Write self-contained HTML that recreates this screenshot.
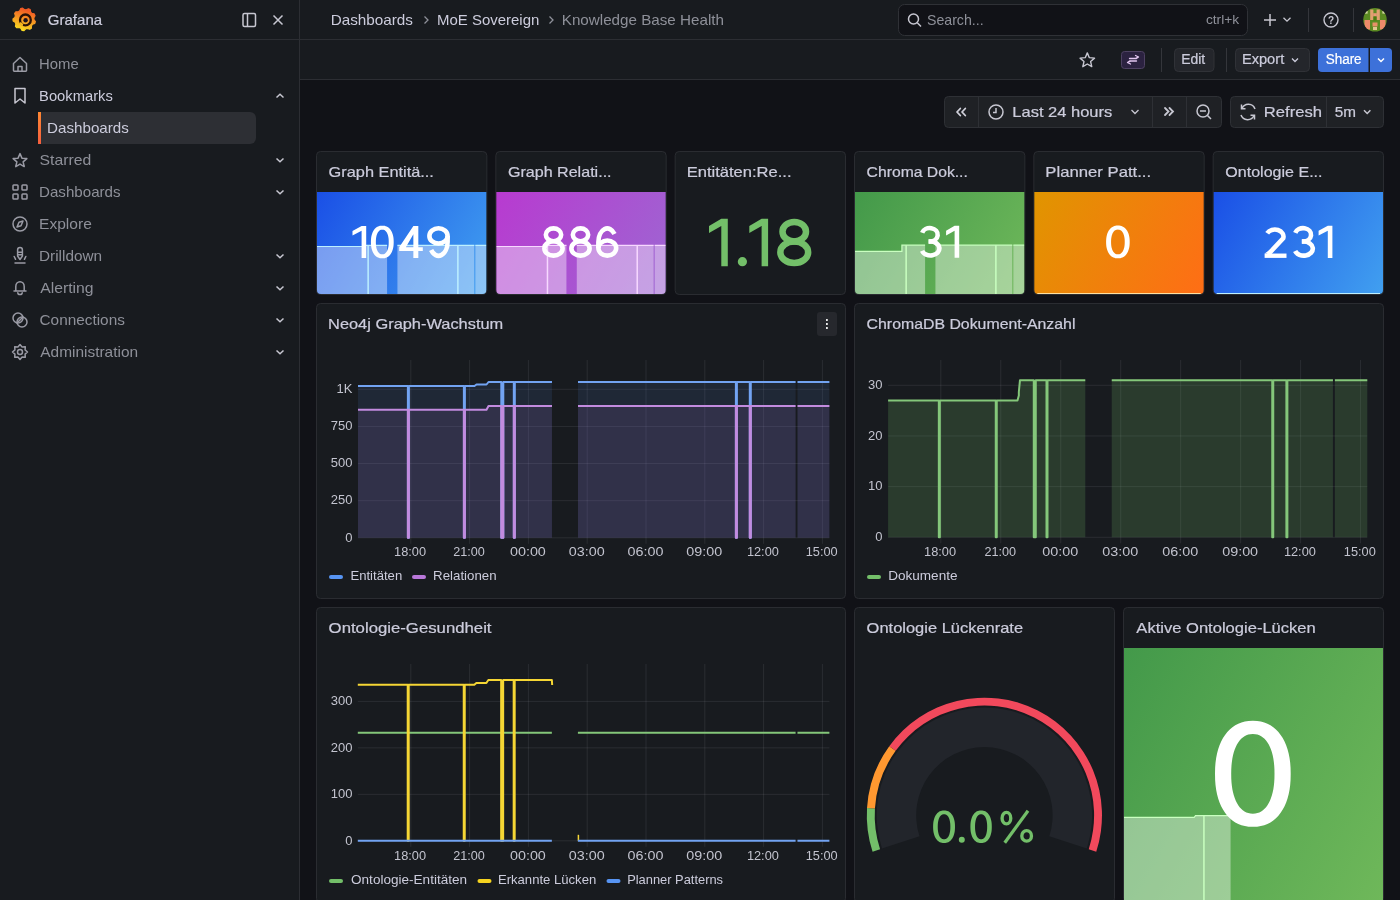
<!DOCTYPE html>
<html><head><meta charset="utf-8"><title>Knowledge Base Health - Dashboards - Grafana</title>
<style>
html,body{margin:0;padding:0;width:1400px;height:900px;overflow:hidden;background:#111217;}
svg{display:block;font-family:"Liberation Sans", sans-serif;will-change:transform;}
</style></head>
<body>
<svg width="1400" height="900" viewBox="0 0 1400 900">
<defs>
<linearGradient id="glogo" x1="0" y1="1" x2="0.3" y2="0">
<stop offset="0" stop-color="#fcee21"/><stop offset="1" stop-color="#f15a24"/></linearGradient>
<linearGradient id="gblue" x1="0" y1="0.2" x2="1" y2="0.8"><stop offset="0" stop-color="#1a4fe6"/><stop offset="1" stop-color="#41a0f0"/></linearGradient>
<linearGradient id="gpurple" x1="0" y1="0.2" x2="1" y2="0.8"><stop offset="0" stop-color="#b83ad0"/><stop offset="1" stop-color="#9d67d2"/></linearGradient>
<linearGradient id="ggreen" x1="0" y1="0.2" x2="1" y2="0.8"><stop offset="0" stop-color="#43994a"/><stop offset="1" stop-color="#6fb85a"/></linearGradient>
<linearGradient id="gorange" x1="0" y1="0.2" x2="1" y2="0.8"><stop offset="0" stop-color="#e09500"/><stop offset="1" stop-color="#ff6d16"/></linearGradient>
<linearGradient id="gblue_0" gradientUnits="userSpaceOnUse" x1="315.12" y1="193.53" x2="488.22" y2="293.47"><stop offset="0" stop-color="#1a4fe6"/><stop offset="1" stop-color="#41a0f0"/></linearGradient>
<linearGradient id="gpurple_1" gradientUnits="userSpaceOnUse" x1="494.45" y1="193.53" x2="667.55" y2="293.47"><stop offset="0" stop-color="#b83ad0"/><stop offset="1" stop-color="#9d67d2"/></linearGradient>
<linearGradient id="ggreen_2" gradientUnits="userSpaceOnUse" x1="853.12" y1="193.53" x2="1026.22" y2="293.47"><stop offset="0" stop-color="#43994a"/><stop offset="1" stop-color="#6fb85a"/></linearGradient>
<linearGradient id="gorange_3" gradientUnits="userSpaceOnUse" x1="1032.45" y1="193.53" x2="1205.55" y2="293.47"><stop offset="0" stop-color="#e09500"/><stop offset="1" stop-color="#ff6d16"/></linearGradient>
<linearGradient id="gblue_4" gradientUnits="userSpaceOnUse" x1="1211.78" y1="193.53" x2="1384.88" y2="293.47"><stop offset="0" stop-color="#1a4fe6"/><stop offset="1" stop-color="#41a0f0"/></linearGradient>
<linearGradient id="ggreen_5" gradientUnits="userSpaceOnUse" x1="1100.42" y1="687.12" x2="1406.58" y2="863.88"><stop offset="0" stop-color="#43994a"/><stop offset="1" stop-color="#6fb85a"/></linearGradient>
</defs>
<rect x="0.00" y="0.00" width="1400.00" height="900.00" fill="#111217"/>
<rect x="0.00" y="0.00" width="299.00" height="900.00" fill="#181b1f"/>
<line x1="299.50" y1="0.00" x2="299.50" y2="900.00" stroke="#2c2e33" stroke-width="1"/>
<rect x="300.00" y="0.00" width="1100.00" height="79.00" fill="#181b1f"/>
<line x1="0.00" y1="39.50" x2="1400.00" y2="39.50" stroke="#2c2e33" stroke-width="1"/>
<line x1="300.00" y1="79.50" x2="1400.00" y2="79.50" stroke="#2c2e33" stroke-width="1"/>
<path d="M35.37,21.54 L34.82,23.43 L32.49,24.31 L31.49,25.66 L31.34,28.14 L29.70,29.23 L27.35,28.40 L25.73,28.79 L24.01,30.60 L22.06,30.37 L20.79,28.23 L19.29,27.49 L16.82,27.77 L15.46,26.34 L15.87,23.89 L15.20,22.35 L13.13,20.98 L13.00,19.01 L14.89,17.39 L15.37,15.79 L14.66,13.40 L15.83,11.82 L18.32,11.79 L19.71,10.87 L20.71,8.59 L22.62,8.13 L24.54,9.70 L26.21,9.89 L28.43,8.78 L30.20,9.66 L30.66,12.11 L31.81,13.32 L34.23,13.90 L35.01,15.71 L33.79,17.87 L33.90,19.54Z" fill="url(#glogo)" stroke="url(#glogo)" stroke-width="1.2" stroke-linejoin="round"/>
<circle cx="25.4" cy="19.9" r="5.4" fill="none" stroke="#2a1208" stroke-width="2.3"/>
<path d="M20 22.5 A5.4 5.4 0 0 0 23 25" fill="none" stroke="#f7b51e" stroke-width="2.4"/>
<circle cx="25.6" cy="20.2" r="2.2" fill="#1c1220"/>
<text x="47.84" y="25.00" font-size="15" fill="#ccccdc" stroke="#ccccdc" stroke-width="0.22" textLength="54.26" lengthAdjust="spacingAndGlyphs">Grafana</text>
<rect x="243.00" y="13.50" width="12.50" height="13.00" fill="none" rx="1.5" stroke="#c7c7d1" stroke-width="1.5"/>
<line x1="247.50" y1="13.50" x2="247.50" y2="26.50" stroke="#c7c7d1" stroke-width="1.5"/>
<path d="M273.5 15.5 L282.5 24.5 M282.5 15.5 L273.5 24.5" fill="none" stroke="#c7c7d1" stroke-width="1.5"/>
<text x="39.08" y="69.00" font-size="15" fill="#8e9099" textLength="39.68" lengthAdjust="spacingAndGlyphs">Home</text>
<text x="39.09" y="101.00" font-size="15" fill="#ccccdc" textLength="73.74" lengthAdjust="spacingAndGlyphs">Bookmarks</text>
<path d="M276.5 97.5 L280 94.2 L283.5 97.5" fill="none" stroke="#c7c7d1" stroke-width="1.5"/>
<text x="39.58" y="165.00" font-size="15" fill="#8e9099" textLength="51.73" lengthAdjust="spacingAndGlyphs">Starred</text>
<path d="M276.5 158.5 L280 161.8 L283.5 158.5" fill="none" stroke="#c7c7d1" stroke-width="1.5"/>
<text x="39.06" y="197.00" font-size="15" fill="#8e9099" textLength="81.49" lengthAdjust="spacingAndGlyphs">Dashboards</text>
<path d="M276.5 190.5 L280 193.8 L283.5 190.5" fill="none" stroke="#c7c7d1" stroke-width="1.5"/>
<text x="39.02" y="229.00" font-size="15" fill="#8e9099" textLength="52.77" lengthAdjust="spacingAndGlyphs">Explore</text>
<text x="39.04" y="261.00" font-size="15" fill="#8e9099" textLength="63.05" lengthAdjust="spacingAndGlyphs">Drilldown</text>
<path d="M276.5 254.5 L280 257.8 L283.5 254.5" fill="none" stroke="#c7c7d1" stroke-width="1.5"/>
<text x="40.27" y="293.00" font-size="15" fill="#8e9099" textLength="53.34" lengthAdjust="spacingAndGlyphs">Alerting</text>
<path d="M276.5 286.5 L280 289.8 L283.5 286.5" fill="none" stroke="#c7c7d1" stroke-width="1.5"/>
<text x="39.52" y="325.00" font-size="15" fill="#8e9099" textLength="85.33" lengthAdjust="spacingAndGlyphs">Connections</text>
<path d="M276.5 318.5 L280 321.8 L283.5 318.5" fill="none" stroke="#c7c7d1" stroke-width="1.5"/>
<text x="40.27" y="357.00" font-size="15" fill="#8e9099" textLength="97.83" lengthAdjust="spacingAndGlyphs">Administration</text>
<path d="M276.5 350.5 L280 353.8 L283.5 350.5" fill="none" stroke="#c7c7d1" stroke-width="1.5"/>
<path d="M41 112 H250 A6 6 0 0 1 256 118 V138 A6 6 0 0 1 250 144 H41 Z" fill="#2d2f34"/>
<linearGradient id="brandv" x1="0" y1="1" x2="0" y2="0"><stop offset="0" stop-color="#f55f3e"/><stop offset="1" stop-color="#ff8833"/></linearGradient>
<rect x="38.00" y="112.00" width="3.00" height="32.00" fill="url(#brandv)"/>
<text x="47.06" y="133.00" font-size="15" fill="#ccccdc" textLength="81.79" lengthAdjust="spacingAndGlyphs">Dashboards</text>
<path d="M13.5 63.5 L20 57.5 L26.5 63.5 V70.5 Q26.5 71.2 25.8 71.2 H14.2 Q13.5 71.2 13.5 70.5 Z M18 71.2 V66.5 H22 V71.2" fill="none" stroke="#9a9ba5" stroke-width="1.5" stroke-linejoin="round" stroke-linecap="round"/>
<path d="M15 88.5 H25 V103 L20 99 L15 103 Z" fill="none" stroke="#c7c7d1" stroke-width="1.5" stroke-linejoin="round" stroke-linecap="round"/>
<path d="M20.00,153.60 L21.94,158.13 L26.85,158.58 L23.14,161.82 L24.23,166.62 L20.00,164.10 L15.77,166.62 L16.86,161.82 L13.15,158.58 L18.06,158.13Z" fill="none" stroke="#9a9ba5" stroke-width="1.5" stroke-linejoin="round" stroke-linecap="round"/>
<rect x="13.00" y="185.00" width="5.00" height="5.00" fill="none" rx="0.8" stroke="#9a9ba5" stroke-width="1.5"/>
<rect x="22.00" y="185.00" width="5.00" height="5.00" fill="none" rx="0.8" stroke="#9a9ba5" stroke-width="1.5"/>
<rect x="13.00" y="194.00" width="5.00" height="5.00" fill="none" rx="0.8" stroke="#9a9ba5" stroke-width="1.5"/>
<rect x="22.00" y="194.00" width="5.00" height="5.00" fill="none" rx="0.8" stroke="#9a9ba5" stroke-width="1.5"/>
<circle cx="20" cy="224" r="7"  fill="none" stroke="#9a9ba5" stroke-width="1.5" stroke-linejoin="round" stroke-linecap="round"/>
<path d="M23 221 L21 225.8 L17 227 L19 222.2 Z" fill="none" stroke="#9a9ba5" stroke-width="1.5" stroke-linejoin="round" stroke-linecap="round"/>
<path d="M17.6 250 A2.4 2.4 0 0 1 22.4 250 V256 L20 259.5 L17.6 256 Z M17.8 252.3 H22.2 M17.8 254.8 H22.2 M14.2 256.5 L15.6 259.3 M25.8 256.5 L24.4 259.3 M15 263 H25" fill="none" stroke="#9a9ba5" stroke-width="1.5" stroke-linejoin="round" stroke-linecap="round"/>
<path d="M15.8 290.5 V286.5 A4.2 4.8 0 0 1 24.2 286.5 V290.5 M14 291 H26 M17.8 292.8 A2.2 1.8 0 0 0 22.2 292.8" fill="none" stroke="#9a9ba5" stroke-width="1.5" stroke-linejoin="round" stroke-linecap="round"/>
<circle cx="18" cy="318" r="5"  fill="none" stroke="#9a9ba5" stroke-width="1.5" stroke-linejoin="round" stroke-linecap="round"/><circle cx="22" cy="322" r="5"  fill="none" stroke="#9a9ba5" stroke-width="1.5" stroke-linejoin="round" stroke-linecap="round"/>
<path d="M17 323 L23 317" fill="none" stroke="#9a9ba5" stroke-width="1.5" stroke-linejoin="round" stroke-linecap="round"/>
<path d="M20.00,344.50 L22.10,346.92 L25.30,346.70 L25.08,349.90 L27.50,352.00 L25.08,354.10 L25.30,357.30 L22.10,357.08 L20.00,359.50 L17.90,357.08 L14.70,357.30 L14.92,354.10 L12.50,352.00 L14.92,349.90 L14.70,346.70 L17.90,346.92Z" fill="none" stroke="#9a9ba5" stroke-width="1.5" stroke-linejoin="round" stroke-linecap="round"/><circle cx="20" cy="352" r="2.5"  fill="none" stroke="#9a9ba5" stroke-width="1.5" stroke-linejoin="round" stroke-linecap="round"/>
<text x="330.65" y="25.00" font-size="15" fill="#ccccdc" textLength="82.30" lengthAdjust="spacingAndGlyphs">Dashboards</text>
<path d="M424.5 16.5 L428 20 L424.5 23.5" fill="none" stroke="#8e9099" stroke-width="1.3"/>
<text x="436.97" y="25.00" font-size="15" fill="#ccccdc" textLength="102.40" lengthAdjust="spacingAndGlyphs">MoE Sovereign</text>
<path d="M549.5 16.5 L553 20 L549.5 23.5" fill="none" stroke="#8e9099" stroke-width="1.3"/>
<text x="561.75" y="25.00" font-size="15" fill="#8e9099" textLength="162.23" lengthAdjust="spacingAndGlyphs">Knowledge Base Health</text>
<rect x="898.50" y="4.50" width="349.00" height="31.00" fill="#111217" rx="6" stroke="#2f3136" stroke-width="1"/>
<circle cx="913.5" cy="19" r="5" fill="none" stroke="#c7c7d1" stroke-width="1.5"/>
<path d="M917.3 22.8 L921 26.5" fill="none" stroke="#c7c7d1" stroke-width="1.5"/>
<text x="926.96" y="25.00" font-size="15" fill="#8e9099" textLength="56.63" lengthAdjust="spacingAndGlyphs">Search...</text>
<text x="1205.92" y="24.00" font-size="13" fill="#8e9099" textLength="33.26" lengthAdjust="spacingAndGlyphs">ctrl+k</text>
<path d="M1270 14 V26 M1264 20 H1276" fill="none" stroke="#c7c7d1" stroke-width="1.5"/>
<path d="M1283.5 17.8 L1287 21.2 L1290.5 17.8" fill="none" stroke="#c7c7d1" stroke-width="1.3"/>
<line x1="1308.50" y1="8.00" x2="1308.50" y2="32.00" stroke="#34363b" stroke-width="1"/>
<circle cx="1331" cy="20" r="7" fill="none" stroke="#c7c7d1" stroke-width="1.4"/>
<text x="1331.00" y="23.50" font-size="10" fill="#c7c7d1" font-weight="700" text-anchor="middle">?</text>
<line x1="1353.50" y1="8.00" x2="1353.50" y2="32.00" stroke="#34363b" stroke-width="1"/>
<clipPath id="avc"><circle cx="1375" cy="19.8" r="11.8"/></clipPath>
<g clip-path="url(#avc)">
<rect x="1363.00" y="8.00" width="24.00" height="24.00" fill="#5b8a22"/>
<rect x="1370.20" y="9.50" width="3.20" height="10.50" fill="#e0a070"/>
<rect x="1376.60" y="9.50" width="3.20" height="10.50" fill="#e0a070"/>
<rect x="1373.20" y="13.20" width="3.60" height="3.20" fill="#e89a78"/>
<rect x="1365.00" y="11.00" width="2.60" height="2.60" fill="#d8d8a8"/>
<rect x="1382.40" y="11.00" width="2.60" height="2.60" fill="#d8d8a8"/>
<rect x="1364.50" y="20.00" width="5.50" height="9.50" fill="#ee8a6a"/>
<rect x="1380.00" y="20.00" width="5.50" height="9.50" fill="#ee8a6a"/>
<rect x="1372.50" y="22.50" width="5.00" height="4.00" fill="#e89068"/>
<rect x="1373.00" y="27.00" width="4.00" height="3.00" fill="#e0c890"/>
<rect x="1373.50" y="16.50" width="3.00" height="4.00" fill="#4a7a10"/>
</g>
<path d="M1087.30,52.90 L1089.36,57.67 L1094.53,58.15 L1090.63,61.58 L1091.77,66.65 L1087.30,64.00 L1082.83,66.65 L1083.97,61.58 L1080.07,58.15 L1085.24,57.67Z" fill="none" stroke="#c7c7d1" stroke-width="1.4" stroke-linejoin="round"/>
<rect x="1121.50" y="51.50" width="23.00" height="17.00" fill="#2b2240" rx="3" stroke="#4e4262" stroke-width="1"/>
<path d="M1127.5 62.5 L1131 61 H1136.5 M1138.5 57 L1135 58.5 H1129.5 M1135.5 55.5 L1138.5 57 L1136 58.8 M1130.5 64 L1127.5 62.5 L1130 60.7" fill="none" stroke="#e2c6f0" stroke-width="1.3" stroke-linecap="round" stroke-linejoin="round"/>
<line x1="1161.50" y1="48.00" x2="1161.50" y2="72.00" stroke="#34363b" stroke-width="1"/>
<rect x="1174.50" y="48.50" width="39.50" height="23.00" fill="#24262b" rx="4" stroke="#303237" stroke-width="1"/>
<text x="1181.16" y="64.00" font-size="14" fill="#ccccdc" stroke="#ccccdc" stroke-width="0.22" textLength="24.05" lengthAdjust="spacingAndGlyphs">Edit</text>
<line x1="1226.50" y1="48.00" x2="1226.50" y2="72.00" stroke="#34363b" stroke-width="1"/>
<rect x="1235.50" y="48.50" width="74.00" height="23.00" fill="#24262b" rx="4" stroke="#303237" stroke-width="1"/>
<text x="1241.90" y="64.00" font-size="14" fill="#ccccdc" stroke="#ccccdc" stroke-width="0.22" textLength="42.31" lengthAdjust="spacingAndGlyphs">Export</text>
<path d="M1292 58.5 L1295 61.5 L1298 58.5" fill="none" stroke="#ccccdc" stroke-width="1.3"/>
<path d="M1322 48 H1368.5 V72 H1322 A4 4 0 0 1 1318 68 V52 A4 4 0 0 1 1322 48 Z" fill="#3d71d9"/>
<path d="M1370 48 H1388 A4 4 0 0 1 1392 52 V68 A4 4 0 0 1 1388 72 H1370 Z" fill="#3d71d9"/>
<text x="1325.69" y="64.00" font-size="14" fill="#ffffff" stroke="#ffffff" stroke-width="0.22" textLength="35.91" lengthAdjust="spacingAndGlyphs">Share</text>
<path d="M1378 58.5 L1381 61.5 L1384 58.5" fill="none" stroke="#ffffff" stroke-width="1.5"/>
<rect x="944.50" y="96.50" width="277.00" height="31.00" fill="#1f2125" rx="4" stroke="#2e3035" stroke-width="1"/>
<line x1="978.50" y1="97.00" x2="978.50" y2="127.00" stroke="#2e3035" stroke-width="1"/>
<line x1="1152.50" y1="97.00" x2="1152.50" y2="127.00" stroke="#2e3035" stroke-width="1"/>
<line x1="1186.50" y1="97.00" x2="1186.50" y2="127.00" stroke="#2e3035" stroke-width="1"/>
<path d="M960.3 108.5 L957 112 L960.3 115.5 M965.3 108.5 L962 112 L965.3 115.5" fill="none" stroke="#d0d0da" stroke-width="1.8" stroke-linecap="round" stroke-linejoin="round"/>
<circle cx="996" cy="112" r="7" fill="none" stroke="#c7c7d1" stroke-width="1.5"/>
<path d="M996 108 V112.5 H993" fill="none" stroke="#c7c7d1" stroke-width="1.5"/>
<text x="1012.35" y="116.90" font-size="15" fill="#ccccdc" stroke="#ccccdc" stroke-width="0.22" textLength="99.95" lengthAdjust="spacingAndGlyphs">Last 24 hours</text>
<path d="M1131.5 110 L1135 113.5 L1138.5 110" fill="none" stroke="#c7c7d1" stroke-width="1.3"/>
<path d="M1165 108 L1168.5 111.5 L1165 115 M1169.5 108 L1173 111.5 L1169.5 115" fill="none" stroke="#c7c7d1" stroke-width="1.8" stroke-linecap="round"/>
<circle cx="1203" cy="111" r="6" fill="none" stroke="#c7c7d1" stroke-width="1.5"/>
<path d="M1200 111 H1206 M1207.5 115.5 L1211 119" fill="none" stroke="#c7c7d1" stroke-width="1.5"/>
<rect x="1230.50" y="96.50" width="153.00" height="31.00" fill="#1f2125" rx="4" stroke="#2e3035" stroke-width="1"/>
<line x1="1326.50" y1="97.00" x2="1326.50" y2="127.00" stroke="#2e3035" stroke-width="1"/>
<path d="M1255 109 A7 7 0 0 0 1242 108.5 M1241 115 A7 7 0 0 0 1254 115.5" fill="none" stroke="#c7c7d1" stroke-width="1.5"/>
<path d="M1241.5 104.5 V108.8 H1245.5 M1254.5 119.5 V115.2 H1250.5" fill="none" stroke="#c7c7d1" stroke-width="1.5"/>
<text x="1263.84" y="117.00" font-size="15" fill="#ccccdc" stroke="#ccccdc" stroke-width="0.22" textLength="58.14" lengthAdjust="spacingAndGlyphs">Refresh</text>
<text x="1334.79" y="117.00" font-size="15" fill="#ccccdc" stroke="#ccccdc" stroke-width="0.22" textLength="21.22" lengthAdjust="spacingAndGlyphs">5m</text>
<path d="M1364 110.3 L1367.2 113.5 L1370.4 110.3" fill="none" stroke="#c7c7d1" stroke-width="1.5"/>
<rect x="316.50" y="151.50" width="170.33" height="143.00" fill="#181b1f" rx="4" stroke="#2a2c31" stroke-width="1"/>
<text x="328.58" y="177.00" font-size="15" fill="#ccccdc" stroke="#ccccdc" stroke-width="0.22" textLength="105.31" lengthAdjust="spacingAndGlyphs">Graph Entitä...</text>
<path d="M317.00 192 H486.33 V290.00 A4 4 0 0 1 482.33 294.00 H321.00 A4 4 0 0 1 317.00 290.00 Z" fill="url(#gblue_0)"/>
<clipPath id="sc0"><path d="M317.00 192 H486.33 V290.00 A4 4 0 0 1 482.33 294.00 H321.00 A4 4 0 0 1 317.00 290.00 Z"/></clipPath>
<g clip-path="url(#sc0)">
<path d="M317.00 294 V246.50 H363.91 V245.30 H387.10 V294 Z" fill="rgba(255,255,255,0.4)"/>
<path d="M317.00 246.50 H363.91 V245.30 H387.10" fill="none" stroke="#bdf0ff" stroke-width="1.2"/>
<path d="M397.43 294 V245.30 H474.31 V294 Z" fill="rgba(255,255,255,0.4)"/>
<path d="M397.43 245.30 H474.31" fill="none" stroke="#bdf0ff" stroke-width="1.2"/>
<path d="M475.33 294 V245.30 H486.33 V294 Z" fill="rgba(255,255,255,0.4)"/>
<path d="M475.33 245.30 H486.33" fill="none" stroke="#bdf0ff" stroke-width="1.2"/>
<line x1="368.14" y1="245.30" x2="368.14" y2="294.00" stroke="#bdf0ff" stroke-width="1.5"/>
<line x1="457.89" y1="245.30" x2="457.89" y2="294.00" stroke="#bdf0ff" stroke-width="1.5"/>
</g>
<path d="M352.50 230.89 L361.60 225.90 L366.20 225.90 L366.20 258.10 L361.60 258.10 L361.60 230.80 L352.50 235.56Z" fill="#ffffff"/>
<path d="M393.70 242.00 L393.66 243.87 L393.55 245.45 L393.35 246.92 L393.09 248.30 L392.75 249.61 L392.33 250.83 L391.85 251.98 L391.30 253.04 L390.68 254.02 L390.00 254.91 L389.26 255.70 L388.46 256.39 L387.60 256.99 L386.69 257.48 L385.73 257.86 L384.70 258.14 L383.60 258.30 L382.30 258.36 L381.00 258.30 L379.90 258.14 L378.87 257.86 L377.91 257.48 L377.00 256.99 L376.14 256.39 L375.34 255.70 L374.60 254.91 L373.92 254.02 L373.30 253.04 L372.75 251.98 L372.27 250.83 L371.85 249.61 L371.51 248.30 L371.25 246.92 L371.05 245.45 L370.94 243.87 L370.90 242.00 L370.94 240.13 L371.05 238.55 L371.25 237.08 L371.51 235.70 L371.85 234.39 L372.27 233.17 L372.75 232.02 L373.30 230.96 L373.92 229.98 L374.60 229.09 L375.34 228.30 L376.14 227.61 L377.00 227.01 L377.91 226.52 L378.87 226.14 L379.90 225.86 L381.00 225.70 L382.30 225.64 L383.60 225.70 L384.70 225.86 L385.73 226.14 L386.69 226.52 L387.60 227.01 L388.46 227.61 L389.26 228.30 L390.00 229.09 L390.68 229.98 L391.30 230.96 L391.85 232.02 L392.33 233.17 L392.75 234.39 L393.09 235.70 L393.35 237.08 L393.55 238.55 L393.66 240.13Z M388.73 242.00 L388.71 240.59 L388.65 239.40 L388.54 238.30 L388.39 237.26 L388.19 236.28 L387.96 235.35 L387.69 234.49 L387.38 233.69 L387.03 232.95 L386.64 232.29 L386.22 231.69 L385.77 231.17 L385.29 230.72 L384.78 230.35 L384.23 230.06 L383.66 229.86 L383.04 229.73 L382.30 229.69 L381.56 229.73 L380.94 229.86 L380.37 230.06 L379.82 230.35 L379.31 230.72 L378.83 231.17 L378.38 231.69 L377.96 232.29 L377.57 232.95 L377.22 233.69 L376.91 234.49 L376.64 235.35 L376.41 236.28 L376.21 237.26 L376.06 238.30 L375.95 239.40 L375.89 240.59 L375.87 242.00 L375.89 243.41 L375.95 244.60 L376.06 245.70 L376.21 246.74 L376.41 247.72 L376.64 248.65 L376.91 249.51 L377.22 250.31 L377.57 251.05 L377.96 251.71 L378.38 252.31 L378.83 252.83 L379.31 253.28 L379.82 253.65 L380.37 253.94 L380.94 254.14 L381.56 254.27 L382.30 254.31 L383.04 254.27 L383.66 254.14 L384.23 253.94 L384.78 253.65 L385.29 253.28 L385.77 252.83 L386.22 252.31 L386.64 251.71 L387.03 251.05 L387.38 250.31 L387.69 249.51 L387.96 248.65 L388.19 247.72 L388.39 246.74 L388.54 245.70 L388.65 244.60 L388.71 243.41Z" fill="#ffffff" fill-rule="evenodd"/>
<path d="M399.20 247.15 L413.36 225.90 L418.33 225.90 L418.33 247.15 L422.80 247.15 L422.80 250.92 L418.33 250.92 L418.33 258.10 L413.36 258.10 L413.36 250.92 L399.20 250.92Z M405.87 247.15 L413.36 234.24 L413.36 247.15Z" fill="#ffffff" fill-rule="evenodd"/>
<path d="M429.40 248.12 A9.10 7.68 0 1 0 447.60 248.12 A9.10 7.68 0 1 0 429.40 248.12 Z" fill="none" stroke="#ffffff" stroke-width="4.60" transform="rotate(180 438.50 242.00)"/>
<path d="M429.40 248.12 L429.40 242.00 A9.10 13.80 0 0 1 445.86 233.89" fill="none" stroke="#ffffff" stroke-width="4.60" transform="rotate(180 438.50 242.00)"/>
<rect x="495.83" y="151.50" width="170.33" height="143.00" fill="#181b1f" rx="4" stroke="#2a2c31" stroke-width="1"/>
<text x="507.92" y="177.00" font-size="15" fill="#ccccdc" stroke="#ccccdc" stroke-width="0.22" textLength="103.68" lengthAdjust="spacingAndGlyphs">Graph Relati...</text>
<path d="M496.33 192 H665.67 V290.00 A4 4 0 0 1 661.67 294.00 H500.33 A4 4 0 0 1 496.33 290.00 Z" fill="url(#gpurple_1)"/>
<clipPath id="sc1"><path d="M496.33 192 H665.67 V290.00 A4 4 0 0 1 661.67 294.00 H500.33 A4 4 0 0 1 496.33 290.00 Z"/></clipPath>
<g clip-path="url(#sc1)">
<path d="M496.33 294 V246.50 H543.24 V245.30 H566.44 V294 Z" fill="rgba(255,255,255,0.4)"/>
<path d="M496.33 246.50 H543.24 V245.30 H566.44" fill="none" stroke="#f7d8ff" stroke-width="1.2"/>
<path d="M576.77 294 V245.30 H653.64 V294 Z" fill="rgba(255,255,255,0.4)"/>
<path d="M576.77 245.30 H653.64" fill="none" stroke="#f7d8ff" stroke-width="1.2"/>
<path d="M654.66 294 V245.30 H665.67 V294 Z" fill="rgba(255,255,255,0.4)"/>
<path d="M654.66 245.30 H665.67" fill="none" stroke="#f7d8ff" stroke-width="1.2"/>
<line x1="547.47" y1="245.30" x2="547.47" y2="294.00" stroke="#f7d8ff" stroke-width="1.5"/>
<line x1="637.22" y1="245.30" x2="637.22" y2="294.00" stroke="#f7d8ff" stroke-width="1.5"/>
</g>
<path d="M545.83 234.83 A7.67 6.43 0 1 0 561.17 234.83 A7.67 6.43 0 1 0 545.83 234.83 Z" fill="none" stroke="#ffffff" stroke-width="4.60"/>
<path d="M544.40 248.43 A9.10 7.17 0 1 0 562.60 248.43 A9.10 7.17 0 1 0 544.40 248.43 Z" fill="none" stroke="#ffffff" stroke-width="4.60"/>
<path d="M572.83 234.83 A7.67 6.43 0 1 0 588.17 234.83 A7.67 6.43 0 1 0 572.83 234.83 Z" fill="none" stroke="#ffffff" stroke-width="4.60"/>
<path d="M571.40 248.43 A9.10 7.17 0 1 0 589.60 248.43 A9.10 7.17 0 1 0 571.40 248.43 Z" fill="none" stroke="#ffffff" stroke-width="4.60"/>
<path d="M598.40 248.04 A8.90 7.56 0 1 0 616.20 248.04 A8.90 7.56 0 1 0 598.40 248.04 Z" fill="none" stroke="#ffffff" stroke-width="4.60"/>
<path d="M598.40 248.04 L598.40 242.00 A8.90 13.60 0 0 1 614.50 234.01" fill="none" stroke="#ffffff" stroke-width="4.60"/>
<rect x="675.17" y="151.50" width="170.33" height="143.00" fill="#181b1f" rx="4" stroke="#2a2c31" stroke-width="1"/>
<text x="686.71" y="177.00" font-size="15" fill="#ccccdc" stroke="#ccccdc" stroke-width="0.22" textLength="104.87" lengthAdjust="spacingAndGlyphs">Entitäten:Re...</text>
<path d="M709.00 226.08 L721.30 218.70 L727.80 218.70 L727.80 266.30 L721.30 266.30 L721.30 225.93 L709.00 232.98Z" fill="#73bf69"/>
<path d="M737.80 261.70 A4.60 4.60 0 1 0 747.00 261.70 A4.60 4.60 0 1 0 737.80 261.70 Z" fill="#73bf69"/>
<path d="M749.30 226.08 L761.60 218.70 L768.10 218.70 L768.10 266.30 L761.60 266.30 L761.60 225.93 L749.30 232.98Z" fill="#73bf69"/>
<path d="M782.49 231.68 A11.76 9.73 0 1 0 806.01 231.68 A11.76 9.73 0 1 0 782.49 231.68 Z" fill="none" stroke="#73bf69" stroke-width="6.50"/>
<path d="M780.35 252.23 A13.90 10.82 0 1 0 808.15 252.23 A13.90 10.82 0 1 0 780.35 252.23 Z" fill="none" stroke="#73bf69" stroke-width="6.50"/>
<rect x="854.50" y="151.50" width="170.33" height="143.00" fill="#181b1f" rx="4" stroke="#2a2c31" stroke-width="1"/>
<text x="866.60" y="177.00" font-size="15" fill="#ccccdc" stroke="#ccccdc" stroke-width="0.22" textLength="101.23" lengthAdjust="spacingAndGlyphs">Chroma Dok...</text>
<path d="M855.00 192 H1024.33 V290.00 A4 4 0 0 1 1020.33 294.00 H859.00 A4 4 0 0 1 855.00 290.00 Z" fill="url(#ggreen_2)"/>
<clipPath id="sc3"><path d="M855.00 192 H1024.33 V290.00 A4 4 0 0 1 1020.33 294.00 H859.00 A4 4 0 0 1 855.00 290.00 Z"/></clipPath>
<g clip-path="url(#sc3)">
<path d="M855.00 294 V251.30 H901.91 V245.20 H925.10 V294 Z" fill="rgba(255,255,255,0.4)"/>
<path d="M855.00 251.30 H901.91 V245.20 H925.10" fill="none" stroke="#c9ffc0" stroke-width="1.2"/>
<path d="M935.43 294 V245.20 H1012.31 V294 Z" fill="rgba(255,255,255,0.4)"/>
<path d="M935.43 245.20 H1012.31" fill="none" stroke="#c9ffc0" stroke-width="1.2"/>
<path d="M1013.33 294 V245.20 H1024.33 V294 Z" fill="rgba(255,255,255,0.4)"/>
<path d="M1013.33 245.20 H1024.33" fill="none" stroke="#c9ffc0" stroke-width="1.2"/>
<line x1="906.14" y1="245.20" x2="906.14" y2="294.00" stroke="#c9ffc0" stroke-width="1.5"/>
<line x1="995.89" y1="245.20" x2="995.89" y2="294.00" stroke="#c9ffc0" stroke-width="1.5"/>
</g>
<path d="M922.18 232.83 A7.94 6.69 0 1 1 929.78 241.48 H928.61" fill="none" stroke="#ffffff" stroke-width="4.60"/>
<path d="M928.61 241.48 H930.45 A8.95 7.01 0 1 1 922.04 250.89" fill="none" stroke="#ffffff" stroke-width="4.60"/>
<path d="M946.10 230.76 L954.60 225.80 L959.20 225.80 L959.20 257.80 L954.60 257.80 L954.60 230.67 L946.10 235.40Z" fill="#ffffff"/>
<rect x="1033.83" y="151.50" width="170.33" height="143.00" fill="#181b1f" rx="4" stroke="#2a2c31" stroke-width="1"/>
<text x="1045.36" y="177.00" font-size="15" fill="#ccccdc" stroke="#ccccdc" stroke-width="0.22" textLength="105.79" lengthAdjust="spacingAndGlyphs">Planner Patt...</text>
<path d="M1034.33 192 H1203.67 V290.00 A4 4 0 0 1 1199.67 294.00 H1038.33 A4 4 0 0 1 1034.33 290.00 Z" fill="url(#gorange_3)"/>
<line x1="1037.33" y1="293.50" x2="1200.67" y2="293.50" stroke="#ffe0a0" stroke-width="1"/>
<path d="M1129.70 241.95 L1129.66 243.83 L1129.54 245.41 L1129.34 246.88 L1129.07 248.27 L1128.71 249.58 L1128.28 250.81 L1127.78 251.96 L1127.21 253.03 L1126.57 254.01 L1125.87 254.90 L1125.10 255.69 L1124.27 256.39 L1123.39 256.98 L1122.45 257.48 L1121.45 257.86 L1120.39 258.14 L1119.25 258.30 L1117.90 258.36 L1116.55 258.30 L1115.41 258.14 L1114.35 257.86 L1113.35 257.48 L1112.41 256.98 L1111.53 256.39 L1110.70 255.69 L1109.93 254.90 L1109.23 254.01 L1108.59 253.03 L1108.02 251.96 L1107.52 250.81 L1107.09 249.58 L1106.73 248.27 L1106.46 246.88 L1106.26 245.41 L1106.14 243.83 L1106.10 241.95 L1106.14 240.07 L1106.26 238.49 L1106.46 237.02 L1106.73 235.63 L1107.09 234.32 L1107.52 233.09 L1108.02 231.94 L1108.59 230.87 L1109.23 229.89 L1109.93 229.00 L1110.70 228.21 L1111.53 227.51 L1112.41 226.92 L1113.35 226.42 L1114.35 226.04 L1115.41 225.76 L1116.55 225.60 L1117.90 225.54 L1119.25 225.60 L1120.39 225.76 L1121.45 226.04 L1122.45 226.42 L1123.39 226.92 L1124.27 227.51 L1125.10 228.21 L1125.87 229.00 L1126.57 229.89 L1127.21 230.87 L1127.78 231.94 L1128.28 233.09 L1128.71 234.32 L1129.07 235.63 L1129.34 237.02 L1129.54 238.49 L1129.66 240.07Z M1124.73 241.95 L1124.71 240.54 L1124.64 239.34 L1124.52 238.23 L1124.36 237.19 L1124.16 236.20 L1123.91 235.28 L1123.62 234.41 L1123.29 233.61 L1122.92 232.87 L1122.51 232.20 L1122.07 231.60 L1121.59 231.07 L1121.08 230.62 L1120.53 230.25 L1119.95 229.96 L1119.34 229.76 L1118.68 229.63 L1117.90 229.59 L1117.12 229.63 L1116.46 229.76 L1115.85 229.96 L1115.27 230.25 L1114.72 230.62 L1114.21 231.07 L1113.73 231.60 L1113.29 232.20 L1112.88 232.87 L1112.51 233.61 L1112.18 234.41 L1111.89 235.28 L1111.64 236.20 L1111.44 237.19 L1111.28 238.23 L1111.16 239.34 L1111.09 240.54 L1111.07 241.95 L1111.09 243.36 L1111.16 244.56 L1111.28 245.67 L1111.44 246.71 L1111.64 247.70 L1111.89 248.62 L1112.18 249.49 L1112.51 250.29 L1112.88 251.03 L1113.29 251.70 L1113.73 252.30 L1114.21 252.83 L1114.72 253.28 L1115.27 253.65 L1115.85 253.94 L1116.46 254.14 L1117.12 254.27 L1117.90 254.31 L1118.68 254.27 L1119.34 254.14 L1119.95 253.94 L1120.53 253.65 L1121.08 253.28 L1121.59 252.83 L1122.07 252.30 L1122.51 251.70 L1122.92 251.03 L1123.29 250.29 L1123.62 249.49 L1123.91 248.62 L1124.16 247.70 L1124.36 246.71 L1124.52 245.67 L1124.64 244.56 L1124.71 243.36Z" fill="#ffffff" fill-rule="evenodd"/>
<rect x="1213.17" y="151.50" width="170.33" height="143.00" fill="#181b1f" rx="4" stroke="#2a2c31" stroke-width="1"/>
<text x="1225.31" y="177.00" font-size="15" fill="#ccccdc" stroke="#ccccdc" stroke-width="0.22" textLength="97.23" lengthAdjust="spacingAndGlyphs">Ontologie E...</text>
<path d="M1213.67 192 H1383.00 V290.00 A4 4 0 0 1 1379.00 294.00 H1217.67 A4 4 0 0 1 1213.67 290.00 Z" fill="url(#gblue_4)"/>
<line x1="1216.67" y1="293.50" x2="1380.00" y2="293.50" stroke="#bdf0ff" stroke-width="1"/>
<path d="M1267.19 233.29 A8.65 7.01 0 0 1 1283.19 238.40 L1268.05 254.45" fill="none" stroke="#ffffff" stroke-width="4.60" stroke-linejoin="miter"/>
<path d="M1264.60 253.53 H1286.50 V257.90 H1264.60 Z" fill="#ffffff"/>
<path d="M1264.60 253.53 L1270.35 253.53 L1271.96 248.70 Z" fill="#ffffff"/>
<path d="M1295.29 232.85 A8.07 6.71 0 1 1 1303.02 241.53 H1301.86" fill="none" stroke="#ffffff" stroke-width="4.60"/>
<path d="M1301.86 241.53 H1303.70 A9.10 7.04 0 1 1 1295.15 250.97" fill="none" stroke="#ffffff" stroke-width="4.60"/>
<path d="M1318.60 230.78 L1327.80 225.80 L1332.40 225.80 L1332.40 257.90 L1327.80 257.90 L1327.80 230.68 L1318.60 235.43Z" fill="#ffffff"/>
<rect x="316.50" y="303.50" width="529.00" height="295.00" fill="#181b1f" rx="4" stroke="#2a2c31" stroke-width="1"/>
<text x="328.06" y="329.00" font-size="15" fill="#ccccdc" stroke="#ccccdc" stroke-width="0.22" textLength="175.22" lengthAdjust="spacingAndGlyphs">Neo4j Graph-Wachstum</text>
<rect x="817.00" y="312.00" width="20.00" height="24.00" fill="#26282d" rx="3"/>
<rect x="826.00" y="319.10" width="1.80" height="1.80" fill="#ffffff"/>
<rect x="826.00" y="323.10" width="1.80" height="1.80" fill="#ffffff"/>
<rect x="826.00" y="327.10" width="1.80" height="1.80" fill="#ffffff"/>
<line x1="358.00" y1="537.80" x2="829.40" y2="537.80" stroke="rgba(204,204,220,0.10)" stroke-width="1"/>
<line x1="358.00" y1="500.67" x2="829.40" y2="500.67" stroke="rgba(204,204,220,0.10)" stroke-width="1"/>
<line x1="358.00" y1="463.55" x2="829.40" y2="463.55" stroke="rgba(204,204,220,0.10)" stroke-width="1"/>
<line x1="358.00" y1="426.43" x2="829.40" y2="426.43" stroke="rgba(204,204,220,0.10)" stroke-width="1"/>
<line x1="358.00" y1="389.30" x2="829.40" y2="389.30" stroke="rgba(204,204,220,0.10)" stroke-width="1"/>
<line x1="410.80" y1="360.00" x2="410.80" y2="543.80" stroke="rgba(204,204,220,0.10)" stroke-width="1"/>
<line x1="469.60" y1="360.00" x2="469.60" y2="543.80" stroke="rgba(204,204,220,0.10)" stroke-width="1"/>
<line x1="528.40" y1="360.00" x2="528.40" y2="543.80" stroke="rgba(204,204,220,0.10)" stroke-width="1"/>
<line x1="587.20" y1="360.00" x2="587.20" y2="543.80" stroke="rgba(204,204,220,0.10)" stroke-width="1"/>
<line x1="646.00" y1="360.00" x2="646.00" y2="543.80" stroke="rgba(204,204,220,0.10)" stroke-width="1"/>
<line x1="704.80" y1="360.00" x2="704.80" y2="543.80" stroke="rgba(204,204,220,0.10)" stroke-width="1"/>
<line x1="763.60" y1="360.00" x2="763.60" y2="543.80" stroke="rgba(204,204,220,0.10)" stroke-width="1"/>
<line x1="822.40" y1="360.00" x2="822.40" y2="543.80" stroke="rgba(204,204,220,0.10)" stroke-width="1"/>
<text x="352.40" y="541.60" font-size="13" fill="#c3c4cf" text-anchor="end">0</text>
<text x="352.40" y="504.47" font-size="13" fill="#c3c4cf" text-anchor="end">250</text>
<text x="352.40" y="467.35" font-size="13" fill="#c3c4cf" text-anchor="end">500</text>
<text x="352.40" y="430.23" font-size="13" fill="#c3c4cf" text-anchor="end">750</text>
<text x="352.40" y="393.10" font-size="13" fill="#c3c4cf" text-anchor="end">1K</text>
<text x="410.06" y="556.40" font-size="13" fill="#c3c4cf" text-anchor="middle" textLength="31.97" lengthAdjust="spacingAndGlyphs">18:00</text>
<text x="469.03" y="556.40" font-size="13" fill="#c3c4cf" text-anchor="middle" textLength="31.63" lengthAdjust="spacingAndGlyphs">21:00</text>
<text x="527.90" y="556.40" font-size="13" fill="#c3c4cf" text-anchor="middle" textLength="35.92" lengthAdjust="spacingAndGlyphs">00:00</text>
<text x="586.70" y="556.40" font-size="13" fill="#c3c4cf" text-anchor="middle" textLength="35.92" lengthAdjust="spacingAndGlyphs">03:00</text>
<text x="645.50" y="556.40" font-size="13" fill="#c3c4cf" text-anchor="middle" textLength="35.92" lengthAdjust="spacingAndGlyphs">06:00</text>
<text x="704.30" y="556.40" font-size="13" fill="#c3c4cf" text-anchor="middle" textLength="35.92" lengthAdjust="spacingAndGlyphs">09:00</text>
<text x="762.86" y="556.40" font-size="13" fill="#c3c4cf" text-anchor="middle" textLength="31.97" lengthAdjust="spacingAndGlyphs">12:00</text>
<text x="821.66" y="556.40" font-size="13" fill="#c3c4cf" text-anchor="middle" textLength="31.97" lengthAdjust="spacingAndGlyphs">15:00</text>
<path d="M358.00 386.00 H407.89 V537.80 H408.89 V386.00 H463.89 V537.80 H464.89 V386.00 H474.48 L476.48 384.50 H486.50 L488.50 382.00 H501.30 V537.80 H503.30 V382.00 H513.82 V537.80 H514.82 V382.00 H551.98 V537.80 H358.00 Z" fill="rgba(87,148,242,0.11)"/>
<path d="M578.00 382.00 H735.89 V537.80 H736.89 V382.00 H749.80 V537.80 H750.80 V382.00 H795.60 V537.80 H578.00 Z" fill="rgba(87,148,242,0.11)"/>
<path d="M797.49 382.00 H829.40 V537.80 H797.49 Z" fill="rgba(87,148,242,0.11)"/>
<path d="M358.00 386.00 H407.89 V537.80 H408.89 V386.00 H463.89 V537.80 H464.89 V386.00 H474.48 L476.48 384.50 H486.50 L488.50 382.00 H501.30 V537.80 H503.30 V382.00 H513.82 V537.80 H514.82 V382.00 H551.98" fill="none" stroke="#72a3f2" stroke-width="2" stroke-linejoin="round"/>
<path d="M578.00 382.00 H735.89 V537.80 H736.89 V382.00 H749.80 V537.80 H750.80 V382.00 H795.60" fill="none" stroke="#72a3f2" stroke-width="2" stroke-linejoin="round"/>
<path d="M797.49 382.00 H829.40" fill="none" stroke="#72a3f2" stroke-width="2" stroke-linejoin="round"/>
<path d="M358.00 409.70 H407.89 V537.80 H408.89 V409.70 H463.89 V537.80 H464.89 V409.70 H474.48 L476.48 409.70 H486.50 L488.50 406.00 H501.30 V537.80 H503.30 V406.00 H513.82 V537.80 H514.82 V406.00 H551.98 V537.80 H358.00 Z" fill="rgba(184,119,217,0.12)"/>
<path d="M578.00 406.00 H735.89 V537.80 H736.89 V406.00 H749.80 V537.80 H750.80 V406.00 H795.60 V537.80 H578.00 Z" fill="rgba(184,119,217,0.12)"/>
<path d="M797.49 406.00 H829.40 V537.80 H797.49 Z" fill="rgba(184,119,217,0.12)"/>
<path d="M358.00 409.70 H407.89 V537.80 H408.89 V409.70 H463.89 V537.80 H464.89 V409.70 H474.48 L476.48 409.70 H486.50 L488.50 406.00 H501.30 V537.80 H503.30 V406.00 H513.82 V537.80 H514.82 V406.00 H551.98" fill="none" stroke="#c28bdf" stroke-width="2" stroke-linejoin="round"/>
<path d="M578.00 406.00 H735.89 V537.80 H736.89 V406.00 H749.80 V537.80 H750.80 V406.00 H795.60" fill="none" stroke="#c28bdf" stroke-width="2" stroke-linejoin="round"/>
<path d="M797.49 406.00 H829.40" fill="none" stroke="#c28bdf" stroke-width="2" stroke-linejoin="round"/>
<rect x="329.00" y="575.10" width="14.00" height="4.00" fill="#5794f2" rx="2"/>
<text x="350.42" y="579.80" font-size="13" fill="#ccccdc" textLength="51.83" lengthAdjust="spacingAndGlyphs">Entitäten</text>
<rect x="412.00" y="575.10" width="14.00" height="4.00" fill="#b877d9" rx="2"/>
<text x="433.11" y="579.80" font-size="13" fill="#ccccdc" textLength="63.45" lengthAdjust="spacingAndGlyphs">Relationen</text>
<rect x="854.50" y="303.50" width="529.00" height="295.00" fill="#181b1f" rx="4" stroke="#2a2c31" stroke-width="1"/>
<text x="866.59" y="329.00" font-size="15" fill="#ccccdc" stroke="#ccccdc" stroke-width="0.22" textLength="208.87" lengthAdjust="spacingAndGlyphs">ChromaDB Dokument-Anzahl</text>
<line x1="888.10" y1="537.30" x2="1367.30" y2="537.30" stroke="rgba(204,204,220,0.10)" stroke-width="1"/>
<line x1="888.10" y1="486.63" x2="1367.30" y2="486.63" stroke="rgba(204,204,220,0.10)" stroke-width="1"/>
<line x1="888.10" y1="435.97" x2="1367.30" y2="435.97" stroke="rgba(204,204,220,0.10)" stroke-width="1"/>
<line x1="888.10" y1="385.30" x2="1367.30" y2="385.30" stroke="rgba(204,204,220,0.10)" stroke-width="1"/>
<line x1="940.80" y1="360.00" x2="940.80" y2="543.30" stroke="rgba(204,204,220,0.10)" stroke-width="1"/>
<line x1="1000.77" y1="360.00" x2="1000.77" y2="543.30" stroke="rgba(204,204,220,0.10)" stroke-width="1"/>
<line x1="1060.74" y1="360.00" x2="1060.74" y2="543.30" stroke="rgba(204,204,220,0.10)" stroke-width="1"/>
<line x1="1120.71" y1="360.00" x2="1120.71" y2="543.30" stroke="rgba(204,204,220,0.10)" stroke-width="1"/>
<line x1="1180.68" y1="360.00" x2="1180.68" y2="543.30" stroke="rgba(204,204,220,0.10)" stroke-width="1"/>
<line x1="1240.65" y1="360.00" x2="1240.65" y2="543.30" stroke="rgba(204,204,220,0.10)" stroke-width="1"/>
<line x1="1300.62" y1="360.00" x2="1300.62" y2="543.30" stroke="rgba(204,204,220,0.10)" stroke-width="1"/>
<line x1="1360.59" y1="360.00" x2="1360.59" y2="543.30" stroke="rgba(204,204,220,0.10)" stroke-width="1"/>
<text x="882.50" y="541.10" font-size="13" fill="#c3c4cf" text-anchor="end">0</text>
<text x="882.50" y="490.43" font-size="13" fill="#c3c4cf" text-anchor="end">10</text>
<text x="882.50" y="439.77" font-size="13" fill="#c3c4cf" text-anchor="end">20</text>
<text x="882.50" y="389.10" font-size="13" fill="#c3c4cf" text-anchor="end">30</text>
<text x="940.06" y="556.40" font-size="13" fill="#c3c4cf" text-anchor="middle" textLength="31.97" lengthAdjust="spacingAndGlyphs">18:00</text>
<text x="1000.20" y="556.40" font-size="13" fill="#c3c4cf" text-anchor="middle" textLength="31.63" lengthAdjust="spacingAndGlyphs">21:00</text>
<text x="1060.24" y="556.40" font-size="13" fill="#c3c4cf" text-anchor="middle" textLength="35.92" lengthAdjust="spacingAndGlyphs">00:00</text>
<text x="1120.21" y="556.40" font-size="13" fill="#c3c4cf" text-anchor="middle" textLength="35.92" lengthAdjust="spacingAndGlyphs">03:00</text>
<text x="1180.18" y="556.40" font-size="13" fill="#c3c4cf" text-anchor="middle" textLength="35.92" lengthAdjust="spacingAndGlyphs">06:00</text>
<text x="1240.15" y="556.40" font-size="13" fill="#c3c4cf" text-anchor="middle" textLength="35.92" lengthAdjust="spacingAndGlyphs">09:00</text>
<text x="1299.88" y="556.40" font-size="13" fill="#c3c4cf" text-anchor="middle" textLength="31.97" lengthAdjust="spacingAndGlyphs">12:00</text>
<text x="1359.85" y="556.40" font-size="13" fill="#c3c4cf" text-anchor="middle" textLength="31.97" lengthAdjust="spacingAndGlyphs">15:00</text>
<path d="M888.10 400.50 H938.83 V537.30 H939.83 V400.50 H995.76 V537.30 H996.76 V400.50 H1017.48 L1018.83 395.5 V392 L1019.98 380.2 H1033.78 V537.30 H1035.78 V380.20 H1046.50 V537.30 H1047.50 V380.20 H1085.29 V537.30 H888.10 Z" fill="rgba(115,191,105,0.20)"/>
<path d="M1111.74 380.20 H1272.25 V537.30 H1273.25 V380.20 H1286.39 V537.30 H1287.39 V380.20 H1332.94 V537.30 H1111.74 Z" fill="rgba(115,191,105,0.20)"/>
<path d="M1334.86 380.20 H1367.30 V537.30 H1334.86 Z" fill="rgba(115,191,105,0.20)"/>
<path d="M888.10 400.50 H938.83 V537.30 H939.83 V400.50 H995.76 V537.30 H996.76 V400.50 H1017.48 L1018.83 395.5 V392 L1019.98 380.2 H1033.78 V537.30 H1035.78 V380.20 H1046.50 V537.30 H1047.50 V380.20 H1085.29" fill="none" stroke="#84c77a" stroke-width="2" stroke-linejoin="round"/>
<path d="M1111.74 380.20 H1272.25 V537.30 H1273.25 V380.20 H1286.39 V537.30 H1287.39 V380.20 H1332.94" fill="none" stroke="#84c77a" stroke-width="2" stroke-linejoin="round"/>
<path d="M1334.86 380.20 H1367.30" fill="none" stroke="#84c77a" stroke-width="2" stroke-linejoin="round"/>
<rect x="867.00" y="575.10" width="14.00" height="4.00" fill="#73bf69" rx="2"/>
<text x="888.19" y="579.80" font-size="13" fill="#ccccdc" textLength="69.31" lengthAdjust="spacingAndGlyphs">Dokumente</text>
<rect x="316.50" y="607.50" width="529.00" height="295.00" fill="#181b1f" rx="4" stroke="#2a2c31" stroke-width="1"/>
<text x="328.61" y="633.00" font-size="15" fill="#ccccdc" stroke="#ccccdc" stroke-width="0.22" textLength="162.92" lengthAdjust="spacingAndGlyphs">Ontologie-Gesundheit</text>
<line x1="357.80" y1="840.80" x2="829.40" y2="840.80" stroke="rgba(204,204,220,0.10)" stroke-width="1"/>
<line x1="357.80" y1="794.33" x2="829.40" y2="794.33" stroke="rgba(204,204,220,0.10)" stroke-width="1"/>
<line x1="357.80" y1="747.87" x2="829.40" y2="747.87" stroke="rgba(204,204,220,0.10)" stroke-width="1"/>
<line x1="357.80" y1="701.40" x2="829.40" y2="701.40" stroke="rgba(204,204,220,0.10)" stroke-width="1"/>
<line x1="410.80" y1="664.00" x2="410.80" y2="846.80" stroke="rgba(204,204,220,0.10)" stroke-width="1"/>
<line x1="469.60" y1="664.00" x2="469.60" y2="846.80" stroke="rgba(204,204,220,0.10)" stroke-width="1"/>
<line x1="528.40" y1="664.00" x2="528.40" y2="846.80" stroke="rgba(204,204,220,0.10)" stroke-width="1"/>
<line x1="587.20" y1="664.00" x2="587.20" y2="846.80" stroke="rgba(204,204,220,0.10)" stroke-width="1"/>
<line x1="646.00" y1="664.00" x2="646.00" y2="846.80" stroke="rgba(204,204,220,0.10)" stroke-width="1"/>
<line x1="704.80" y1="664.00" x2="704.80" y2="846.80" stroke="rgba(204,204,220,0.10)" stroke-width="1"/>
<line x1="763.60" y1="664.00" x2="763.60" y2="846.80" stroke="rgba(204,204,220,0.10)" stroke-width="1"/>
<line x1="822.40" y1="664.00" x2="822.40" y2="846.80" stroke="rgba(204,204,220,0.10)" stroke-width="1"/>
<text x="352.40" y="844.60" font-size="13" fill="#c3c4cf" text-anchor="end">0</text>
<text x="352.40" y="798.13" font-size="13" fill="#c3c4cf" text-anchor="end">100</text>
<text x="352.40" y="751.67" font-size="13" fill="#c3c4cf" text-anchor="end">200</text>
<text x="352.40" y="705.20" font-size="13" fill="#c3c4cf" text-anchor="end">300</text>
<text x="410.06" y="859.70" font-size="13" fill="#c3c4cf" text-anchor="middle" textLength="31.97" lengthAdjust="spacingAndGlyphs">18:00</text>
<text x="469.03" y="859.70" font-size="13" fill="#c3c4cf" text-anchor="middle" textLength="31.63" lengthAdjust="spacingAndGlyphs">21:00</text>
<text x="527.90" y="859.70" font-size="13" fill="#c3c4cf" text-anchor="middle" textLength="35.92" lengthAdjust="spacingAndGlyphs">00:00</text>
<text x="586.70" y="859.70" font-size="13" fill="#c3c4cf" text-anchor="middle" textLength="35.92" lengthAdjust="spacingAndGlyphs">03:00</text>
<text x="645.50" y="859.70" font-size="13" fill="#c3c4cf" text-anchor="middle" textLength="35.92" lengthAdjust="spacingAndGlyphs">06:00</text>
<text x="704.30" y="859.70" font-size="13" fill="#c3c4cf" text-anchor="middle" textLength="35.92" lengthAdjust="spacingAndGlyphs">09:00</text>
<text x="762.86" y="859.70" font-size="13" fill="#c3c4cf" text-anchor="middle" textLength="31.97" lengthAdjust="spacingAndGlyphs">12:00</text>
<text x="821.66" y="859.70" font-size="13" fill="#c3c4cf" text-anchor="middle" textLength="31.97" lengthAdjust="spacingAndGlyphs">15:00</text>
<path d="M357.80 732.80 H474.33 L476.33 732.80 H486.36 L488.36 732.80 H551.86" fill="none" stroke="#84c77a" stroke-width="2"/>
<path d="M577.90 732.80 H795.59" fill="none" stroke="#84c77a" stroke-width="2"/>
<path d="M797.47 732.80 H829.40" fill="none" stroke="#84c77a" stroke-width="2"/>
<path d="M357.80 684.70 H407.71 V840.80 H408.71 V684.70 H463.74 V840.80 H464.74 V684.70 H474.33 L476.33 683.00 H486.36 L488.36 680.00 H501.16 V840.80 H503.16 V680.00 H513.68 V840.80 H514.68 V680.00 H551.86 L552.16 685" fill="none" stroke="#f5d634" stroke-width="2.0" stroke-linejoin="round"/>
<path d="M578.40 840.8 V834.8" fill="none" stroke="#f5d634" stroke-width="1.5"/>
<path d="M357.80 840.80 H474.33 L476.33 840.80 H486.36 L488.36 840.80 H551.86" fill="none" stroke="#72a3f2" stroke-width="2"/>
<path d="M577.90 840.80 H795.59" fill="none" stroke="#72a3f2" stroke-width="2"/>
<path d="M797.47 840.80 H829.40" fill="none" stroke="#72a3f2" stroke-width="2"/>
<rect x="329.00" y="879.10" width="14.00" height="4.00" fill="#73bf69" rx="2"/>
<text x="351.06" y="883.80" font-size="13" fill="#ccccdc" textLength="116.02" lengthAdjust="spacingAndGlyphs">Ontologie-Entitäten</text>
<rect x="477.50" y="879.10" width="14.00" height="4.00" fill="#f5d31f" rx="2"/>
<text x="497.93" y="883.80" font-size="13" fill="#ccccdc" textLength="98.33" lengthAdjust="spacingAndGlyphs">Erkannte Lücken</text>
<rect x="606.50" y="879.10" width="14.00" height="4.00" fill="#5794f2" rx="2"/>
<text x="627.14" y="883.80" font-size="13" fill="#ccccdc" textLength="95.92" lengthAdjust="spacingAndGlyphs">Planner Patterns</text>
<rect x="854.50" y="607.50" width="260.00" height="295.00" fill="#181b1f" rx="4" stroke="#2a2c31" stroke-width="1"/>
<text x="866.62" y="633.00" font-size="15" fill="#ccccdc" stroke="#ccccdc" stroke-width="0.22" textLength="156.51" lengthAdjust="spacingAndGlyphs">Ontologie Lückenrate</text>
<path d="M881.97 848.58 A107.7 107.7 0 1 1 1086.83 848.58 L1049.26 836.37 A68.2 68.2 0 1 0 919.54 836.37 Z" fill="#22252b"/>
<path d="M872.56 851.64 A117.6 117.6 0 0 1 867.03 807.92 L874.92 808.41 A109.7 109.7 0 0 0 880.07 849.20 Z" fill="#73bf69"/>
<path d="M867.03 807.92 A117.6 117.6 0 0 1 889.26 746.18 L895.65 750.82 A109.7 109.7 0 0 0 874.92 808.41 Z" fill="#ff9830"/>
<path d="M889.26 746.18 A117.6 117.6 0 0 1 1096.24 851.64 L1088.73 849.20 A109.7 109.7 0 0 0 895.65 750.82 Z" fill="#f2495c"/>
<path d="M955.00 826.75 L954.96 828.61 L954.85 830.19 L954.67 831.65 L954.41 833.03 L954.08 834.33 L953.69 835.56 L953.22 836.70 L952.69 837.76 L952.10 838.73 L951.44 839.62 L950.73 840.41 L949.96 841.10 L949.14 841.69 L948.27 842.18 L947.34 842.56 L946.36 842.84 L945.30 843.00 L944.05 843.06 L942.80 843.00 L941.74 842.84 L940.76 842.56 L939.83 842.18 L938.96 841.69 L938.14 841.10 L937.37 840.41 L936.66 839.62 L936.00 838.73 L935.41 837.76 L934.88 836.70 L934.41 835.56 L934.02 834.33 L933.69 833.03 L933.43 831.65 L933.25 830.19 L933.14 828.61 L933.10 826.75 L933.14 824.89 L933.25 823.31 L933.43 821.85 L933.69 820.47 L934.02 819.17 L934.41 817.94 L934.88 816.80 L935.41 815.74 L936.00 814.77 L936.66 813.88 L937.37 813.09 L938.14 812.40 L938.96 811.81 L939.83 811.32 L940.76 810.94 L941.74 810.66 L942.80 810.50 L944.05 810.44 L945.30 810.50 L946.36 810.66 L947.34 810.94 L948.27 811.32 L949.14 811.81 L949.96 812.40 L950.73 813.09 L951.44 813.88 L952.10 814.77 L952.69 815.74 L953.22 816.80 L953.69 817.94 L954.08 819.17 L954.41 820.47 L954.67 821.85 L954.85 823.31 L954.96 824.89Z M950.36 826.75 L950.33 825.32 L950.27 824.11 L950.16 822.98 L950.02 821.92 L949.83 820.93 L949.60 819.99 L949.33 819.11 L949.03 818.30 L948.68 817.55 L948.31 816.87 L947.90 816.26 L947.46 815.73 L946.98 815.28 L946.48 814.90 L945.95 814.61 L945.38 814.40 L944.77 814.27 L944.05 814.23 L943.33 814.27 L942.72 814.40 L942.15 814.61 L941.62 814.90 L941.12 815.28 L940.64 815.73 L940.20 816.26 L939.79 816.87 L939.42 817.55 L939.07 818.30 L938.77 819.11 L938.50 819.99 L938.27 820.93 L938.08 821.92 L937.94 822.98 L937.83 824.11 L937.77 825.32 L937.74 826.75 L937.77 828.18 L937.83 829.39 L937.94 830.52 L938.08 831.58 L938.27 832.57 L938.50 833.51 L938.77 834.39 L939.07 835.20 L939.42 835.95 L939.79 836.63 L940.20 837.24 L940.64 837.77 L941.12 838.22 L941.62 838.60 L942.15 838.89 L942.72 839.10 L943.33 839.23 L944.05 839.27 L944.77 839.23 L945.38 839.10 L945.95 838.89 L946.48 838.60 L946.98 838.22 L947.46 837.77 L947.90 837.24 L948.31 836.63 L948.68 835.95 L949.03 835.20 L949.33 834.39 L949.60 833.51 L949.83 832.57 L950.02 831.58 L950.16 830.52 L950.27 829.39 L950.33 828.18Z" fill="#73bf69" fill-rule="evenodd"/>
<path d="M958.80 839.80 A3.00 3.00 0 1 0 964.80 839.80 A3.00 3.00 0 1 0 958.80 839.80 Z" fill="#73bf69"/>
<path d="M991.80 826.75 L991.76 828.61 L991.66 830.19 L991.48 831.65 L991.22 833.03 L990.90 834.33 L990.52 835.56 L990.06 836.70 L989.54 837.76 L988.96 838.73 L988.32 839.62 L987.63 840.41 L986.88 841.10 L986.08 841.69 L985.22 842.18 L984.32 842.56 L983.36 842.84 L982.32 843.00 L981.10 843.06 L979.88 843.00 L978.84 842.84 L977.88 842.56 L976.98 842.18 L976.12 841.69 L975.32 841.10 L974.57 840.41 L973.88 839.62 L973.24 838.73 L972.66 837.76 L972.14 836.70 L971.68 835.56 L971.30 834.33 L970.98 833.03 L970.72 831.65 L970.54 830.19 L970.44 828.61 L970.40 826.75 L970.44 824.89 L970.54 823.31 L970.72 821.85 L970.98 820.47 L971.30 819.17 L971.68 817.94 L972.14 816.80 L972.66 815.74 L973.24 814.77 L973.88 813.88 L974.57 813.09 L975.32 812.40 L976.12 811.81 L976.98 811.32 L977.88 810.94 L978.84 810.66 L979.88 810.50 L981.10 810.44 L982.32 810.50 L983.36 810.66 L984.32 810.94 L985.22 811.32 L986.08 811.81 L986.88 812.40 L987.63 813.09 L988.32 813.88 L988.96 814.77 L989.54 815.74 L990.06 816.80 L990.52 817.94 L990.90 819.17 L991.22 820.47 L991.48 821.85 L991.66 823.31 L991.76 824.89Z M987.16 826.75 L987.14 825.32 L987.07 824.11 L986.97 822.98 L986.83 821.92 L986.65 820.93 L986.43 819.99 L986.17 819.11 L985.88 818.30 L985.55 817.55 L985.19 816.87 L984.79 816.26 L984.37 815.73 L983.92 815.28 L983.43 814.90 L982.92 814.61 L982.38 814.40 L981.79 814.27 L981.10 814.23 L980.41 814.27 L979.82 814.40 L979.28 814.61 L978.77 814.90 L978.28 815.28 L977.83 815.73 L977.41 816.26 L977.01 816.87 L976.65 817.55 L976.32 818.30 L976.03 819.11 L975.77 819.99 L975.55 820.93 L975.37 821.92 L975.23 822.98 L975.13 824.11 L975.06 825.32 L975.04 826.75 L975.06 828.18 L975.13 829.39 L975.23 830.52 L975.37 831.58 L975.55 832.57 L975.77 833.51 L976.03 834.39 L976.32 835.20 L976.65 835.95 L977.01 836.63 L977.41 837.24 L977.83 837.77 L978.28 838.22 L978.77 838.60 L979.28 838.89 L979.82 839.10 L980.41 839.23 L981.10 839.27 L981.79 839.23 L982.38 839.10 L982.92 838.89 L983.43 838.60 L983.92 838.22 L984.37 837.77 L984.79 837.24 L985.19 836.63 L985.55 835.95 L985.88 835.20 L986.17 834.39 L986.43 833.51 L986.65 832.57 L986.83 831.58 L986.97 830.52 L987.07 829.39 L987.14 828.18Z" fill="#73bf69" fill-rule="evenodd"/>
<path d="M1002.08 818.16 A4.34 5.79 0 1 0 1010.76 818.16 A4.34 5.79 0 1 0 1002.08 818.16 Z" fill="none" stroke="#73bf69" stroke-width="3.35"/>
<path d="M1021.82 835.90 A4.82 5.22 0 1 0 1031.46 835.90 A4.82 5.22 0 1 0 1021.82 835.90 Z" fill="none" stroke="#73bf69" stroke-width="3.35"/>
<path d="M1028.01 810.70 L1004.73 842.80" fill="none" stroke="#73bf69" stroke-width="3.22"/>
<rect x="1123.50" y="607.50" width="260.00" height="295.00" fill="#181b1f" rx="4" stroke="#2a2c31" stroke-width="1"/>
<text x="1136.37" y="633.00" font-size="15" fill="#ccccdc" stroke="#ccccdc" stroke-width="0.22" textLength="179.41" lengthAdjust="spacingAndGlyphs">Aktive Ontologie-Lücken</text>
<rect x="1124.00" y="648" width="259.00" height="254.00" fill="url(#ggreen_5)"/>
<path d="M1124.00 905 V817.3 H1194.19 L1195.48 815.7 H1230.58 V905 Z" fill="rgba(255,255,255,0.4)"/>
<path d="M1124.00 817.3 H1194.19 L1195.48 815.7 H1230.58" fill="none" stroke="#c9ffc0" stroke-width="1.2"/>
<line x1="1203.93" y1="815.70" x2="1203.93" y2="900.00" stroke="#c9ffc0" stroke-width="1.5"/>
<path d="M1290.70 773.85 L1290.57 779.91 L1290.19 785.03 L1289.55 789.79 L1288.66 794.27 L1287.53 798.49 L1286.16 802.46 L1284.55 806.18 L1282.72 809.62 L1280.66 812.79 L1278.40 815.66 L1275.94 818.23 L1273.29 820.48 L1270.45 822.40 L1267.43 823.98 L1264.23 825.23 L1260.83 826.12 L1257.18 826.66 L1252.85 826.83 L1248.52 826.66 L1244.87 826.12 L1241.47 825.23 L1238.27 823.98 L1235.25 822.40 L1232.41 820.48 L1229.76 818.23 L1227.30 815.66 L1225.04 812.79 L1222.98 809.62 L1221.15 806.18 L1219.54 802.46 L1218.17 798.49 L1217.04 794.27 L1216.15 789.79 L1215.51 785.03 L1215.13 779.91 L1215.00 773.85 L1215.13 767.79 L1215.51 762.67 L1216.15 757.91 L1217.04 753.43 L1218.17 749.21 L1219.54 745.24 L1221.15 741.52 L1222.98 738.08 L1225.04 734.91 L1227.30 732.04 L1229.76 729.47 L1232.41 727.22 L1235.25 725.30 L1238.27 723.72 L1241.47 722.47 L1244.87 721.58 L1248.52 721.04 L1252.85 720.87 L1257.18 721.04 L1260.83 721.58 L1264.23 722.47 L1267.43 723.72 L1270.45 725.30 L1273.29 727.22 L1275.94 729.47 L1278.40 732.04 L1280.66 734.91 L1282.72 738.08 L1284.55 741.52 L1286.16 745.24 L1287.53 749.21 L1288.66 753.43 L1289.55 757.91 L1290.19 762.67 L1290.57 767.79Z M1274.50 773.85 L1274.43 769.30 L1274.21 765.46 L1273.84 761.88 L1273.34 758.52 L1272.69 755.35 L1271.90 752.37 L1270.98 749.58 L1269.93 746.99 L1268.76 744.61 L1267.47 742.46 L1266.06 740.53 L1264.54 738.84 L1262.92 737.40 L1261.19 736.21 L1259.36 735.27 L1257.42 734.60 L1255.32 734.20 L1252.85 734.07 L1250.38 734.20 L1248.28 734.60 L1246.34 735.27 L1244.51 736.21 L1242.78 737.40 L1241.16 738.84 L1239.64 740.53 L1238.23 742.46 L1236.94 744.61 L1235.77 746.99 L1234.72 749.58 L1233.80 752.37 L1233.01 755.35 L1232.36 758.52 L1231.86 761.88 L1231.49 765.46 L1231.27 769.30 L1231.20 773.85 L1231.27 778.40 L1231.49 782.24 L1231.86 785.82 L1232.36 789.18 L1233.01 792.35 L1233.80 795.33 L1234.72 798.12 L1235.77 800.71 L1236.94 803.09 L1238.23 805.24 L1239.64 807.17 L1241.16 808.86 L1242.78 810.30 L1244.51 811.49 L1246.34 812.43 L1248.28 813.10 L1250.38 813.50 L1252.85 813.63 L1255.32 813.50 L1257.42 813.10 L1259.36 812.43 L1261.19 811.49 L1262.92 810.30 L1264.54 808.86 L1266.06 807.17 L1267.47 805.24 L1268.76 803.09 L1269.93 800.71 L1270.98 798.12 L1271.90 795.33 L1272.69 792.35 L1273.34 789.18 L1273.84 785.82 L1274.21 782.24 L1274.43 778.40Z" fill="#ffffff" fill-rule="evenodd"/>
</svg>
</body></html>
